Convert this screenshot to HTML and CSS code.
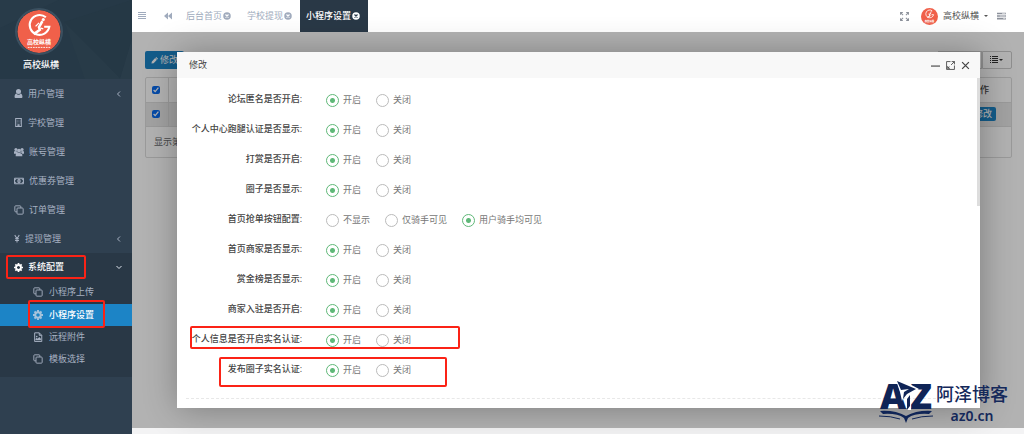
FILE: index.html
```html
<!DOCTYPE html>
<html lang="zh-CN">
<head>
<meta charset="utf-8">
<title>小程序设置</title>
<link rel="stylesheet" href="styles.css">
</head>
<body>
<svg class="defs" aria-hidden="true">
  <symbol id="copy" viewBox="0 0 12 12"><g fill="none" stroke="currentColor" stroke-width="1.1"><rect x="3.6" y="3.6" width="7.4" height="7.4" rx="1"/><path d="M3.500 8.200H2a1 1 0 0 1-1-1V2a1 1 0 0 1 1-1h5.200a1 1 0 0 1 1 1v1.500"/></g></symbol>
  <symbol id="gear" viewBox="0 0 16 16"><path fill="none" stroke="currentColor" stroke-width="3.400" d="M8 3.600a4.400 4.400 0 1 0 0 8.800 4.400 4.400 0 1 0 0-8.800"/><path stroke="currentColor" stroke-width="3" d="M8 0v3M8 13v3M0 8h3M13 8h3M2.400 2.400l2 2M11.600 11.600l2 2M2.400 13.600l2-2M11.600 4.400l2-2"/></symbol>
  <symbol id="close" viewBox="0 0 16 16"><circle cx="8" cy="8" r="7.500" fill="currentColor"/><path d="M5 5l6 6M11 5l-6 6" stroke="var(--cross, #fff)" stroke-width="2.400"/></symbol>
  <symbol id="left" viewBox="0 0 8 8"><path d="M5 1.500L2.500 4 5 6.500" fill="none" stroke="currentColor" stroke-width="1"/></symbol>
  <symbol id="pencil" viewBox="0 0 16 16"><path fill="currentColor" d="M1 15l1-5 7.500-7.500 4 4L6 14zM10.500 1.500L12 0l4 4-1.500 1.500z"/></symbol>
  <symbol id="brand" viewBox="0 0 50 50"><circle cx="25" cy="25" r="25" fill="#f0604a"/><g fill="none" stroke="#fff" stroke-width="2.400"><path d="M33 8.500a11.500 11.500 0 1 0 4 11h-6"/><path stroke-width="3" d="M29 13l-4 7 1 3-7 5"/><path stroke-width="1.500" d="M25 15l-4 4M27 21l3 1"/></g><circle cx="30" cy="11" r="1.800" fill="#fff"/><text class="brand-name" x="25" y="40" text-anchor="middle">高校纵横</text><path stroke="#fff" stroke-width="1" stroke-dasharray="2 1" d="M12 43.500h26"/></symbol>
</svg>
<div class="app">
  <aside class="sidebar">
    <header class="profile">
      <svg class="facets" viewBox="0 0 131 79" preserveAspectRatio="none" aria-hidden="true"><path d="M0 0h58L0 28z" fill="#283b49"/><path d="M64 22l56 57H84z" fill="#283b48"/><path d="M131 38v41h-12z" fill="#293c49"/><path d="M64 22L131 0v38l-12 40z" fill="#253845"/></svg>
      <svg class="avatar"><use href="#brand"/></svg>
      <strong>高校纵横</strong>
    </header>
    <nav>
      <a class="item" href="#"><svg class="ico" viewBox="0 0 16 16"><path fill="currentColor" d="M8 0a4 4 0 0 1 0 9 4.300 4.300 0 0 1 0-9M4 8c2 3 6 3 8 0 2 1 3 3 3 6 0 1-1 2-2 2H3c-1 0-2-1-2-2 0-3 1-5 3-6"/></svg><span>用户管理</span><svg class="arrow"><use href="#left"/></svg></a>
      <a class="item" href="#"><svg class="ico" viewBox="0 0 16 16"><path fill="none" stroke="currentColor" stroke-width="1.800" d="M3 1h10v14H3zM7 15v-3h2v3"/><path stroke="currentColor" stroke-dasharray="1.500 1.500" d="M5 4h7M5 6.500h7M5 9h7"/></svg><span>学校管理</span></a>
      <a class="item" href="#"><svg class="ico wide" viewBox="0 0 18 16"><g fill="currentColor"><circle cx="3.500" cy="3.500" r="2.800"/><circle cx="14.500" cy="3.500" r="2.800"/><circle cx="9" cy="5.500" r="3.500"/><path d="M0 11V8q0-2 2-2l4 1v4zM18 11V8q0-2-2-2l-4 1v4zM3 15.500q0-7 3-7 3 2 6 0 3 0 3 7z"/></g></svg><span>账号管理</span></a>
      <a class="item" href="#"><svg class="ico wide" viewBox="0 0 18 16"><path fill="none" stroke="currentColor" stroke-width="1.800" d="M1 3h16v10H1z"/><path fill="currentColor" d="M2 4h3L2 7zM16 4h-3l3 3zM2 12h3L2 9zM16 12h-3l3-3z"/><ellipse cx="9" cy="8" rx="3" ry="4" fill="currentColor"/><path d="M9 5.500v5" stroke="#2f4050"/></svg><span>优惠券管理</span></a>
      <a class="item" href="#"><svg class="ico wide"><use href="#copy"/></svg><span>订单管理</span></a>
      <a class="item yen" href="#"><svg class="ico slim" viewBox="0 0 10 16"><path fill="none" stroke="currentColor" stroke-width="1.800" d="M1 2l4 6 4-6M5 8v7M1.500 8.500h7M1.500 11.500h7"/></svg><span>提现管理</span><svg class="arrow"><use href="#left"/></svg></a>
      <div class="group">
        <a class="item open" href="#"><svg class="ico"><use href="#gear"/></svg><span>系统配置</span><svg class="arrow down"><use href="#left"/></svg><i class="mark mark-group"></i></a>
        <a class="sub" href="#"><svg class="ico wide"><use href="#copy"/></svg><span>小程序上传</span></a>
        <a class="sub current" href="#"><svg class="ico wide"><use href="#gear"/></svg><span>小程序设置</span><i class="mark mark-sub"></i></a>
        <a class="sub" href="#"><svg class="ico wide" viewBox="0 0 12 12"><path fill="none" stroke="currentColor" stroke-width="1.200" d="M2 1h5.500L10.500 4v7.500H2zM7.500 1v3h3"/><path fill="currentColor" d="M3 10V8.500l1.500-1.500 1 1L7.500 6l2 2v2z"/><circle cx="4.500" cy="5.500" r="1" fill="currentColor"/></svg><span>远程附件</span></a>
        <a class="sub" href="#"><svg class="ico wide"><use href="#copy"/></svg><span>模板选择</span></a>
      </div>
    </nav>
  </aside>
  <div class="page">
    <header class="topbar">
      <button class="bare menu" aria-label="菜单"><svg viewBox="0 0 8 8"><path stroke="currentColor" d="M0 .5h8M0 2.500h8M0 4.500h8M0 6.500h8"/></svg></button>
      <button class="bare back" aria-label="后退"><svg viewBox="0 0 16 16"><path fill="currentColor" d="M8 1v14L0 8zM16 1v14L8 8z"/></svg></button>
      <nav class="tabs">
        <a href="#">后台首页<svg><use href="#close"/></svg></a>
        <a href="#">学校提现<svg><use href="#close"/></svg></a>
        <a class="active" href="#">小程序设置<svg><use href="#close"/></svg></a>
      </nav>
      <div class="tools">
        <button class="bare full" aria-label="全屏"><svg viewBox="0 0 16 16"><path fill="none" stroke="currentColor" stroke-width="1.800" d="M1 5V1h4M11 1h4v4M15 11v4h-4M5 15H1v-4M1 1l4.500 4.500M15 1l-4.500 4.500M15 15l-4.500-4.500M1 15l4.500-4.500"/></svg></button>
        <button class="bare user"><svg class="face"><use href="#brand"/></svg>高校纵横<i class="caret"></i></button>
        <button class="bare tasks" aria-label="任务"><svg viewBox="0 0 16 14"><path stroke="currentColor" stroke-width="3" d="M0 2.500h16M0 7h16M0 11.500h16"/><path stroke="#fff" d="M9 2.500h6M5 7h10M11 11.500h4"/></svg></button>
      </div>
    </header>
    <main class="content">
      <div class="toolbar">
        <button class="edit"><svg><use href="#pencil"/></svg>修改</button>
        <div class="views"><button aria-label="刷新"></button><button aria-label="切换"></button><button aria-label="列"><svg viewBox="0 0 8 8"><path stroke="currentColor" d="M0 .5h1M0 2.500h1M0 4.500h1M0 6.500h1M2 .5h6M2 2.500h6M2 4.500h6M2 6.500h6"/></svg><i class="caret"></i></button></div>
      </div>
      <div class="panel">
        <table>
          <thead><tr><th class="tick"><input type="checkbox" checked aria-label="全选"></th><th></th><th class="action">操作</th></tr></thead>
          <tbody><tr><td class="tick"><input type="checkbox" checked aria-label="选择"></td><td></td><td class="action"><button class="edit small"><svg><use href="#pencil"/></svg>修改</button></td></tr></tbody>
        </table>
        <p>显示第</p>
      </div>
      <div class="shade"></div>
      <section class="dialog" role="dialog" aria-labelledby="dialog-title">
        <header>
          <h1 id="dialog-title">修改</h1>
          <button class="bare" aria-label="最小化"><svg viewBox="0 0 16 16"><path stroke="currentColor" stroke-width="2" d="M0 9h16"/></svg></button>
          <button class="bare" aria-label="最大化"><svg viewBox="0 0 16 16"><path fill="none" stroke="currentColor" stroke-width="1.500" d="M8 1H1v14h14V8M10 1h5v5M9 7l6-6M6 10l-3 3M3 9v4h4"/></svg></button>
          <button class="bare" aria-label="关闭"><svg viewBox="0 0 16 16"><path stroke="currentColor" stroke-width="2.200" d="M2 2l12 12M14 2L2 14"/></svg></button>
        </header>
        <form class="form">
          <fieldset><legend>论坛匿名是否开启:</legend><label><input type="radio" name="a" checked>开启</label><label><input type="radio" name="a">关闭</label></fieldset>
          <fieldset><legend>个人中心跑腿认证是否显示:</legend><label><input type="radio" name="b" checked>开启</label><label><input type="radio" name="b">关闭</label></fieldset>
          <fieldset><legend>打赏是否开启:</legend><label><input type="radio" name="c" checked>开启</label><label><input type="radio" name="c">关闭</label></fieldset>
          <fieldset><legend>圈子是否显示:</legend><label><input type="radio" name="d" checked>开启</label><label><input type="radio" name="d">关闭</label></fieldset>
          <fieldset><legend>首页抢单按钮配置:</legend><label><input type="radio" name="e">不显示</label><label><input type="radio" name="e">仅骑手可见</label><label><input type="radio" name="e" checked>用户骑手均可见</label></fieldset>
          <fieldset><legend>首页商家是否显示:</legend><label><input type="radio" name="f" checked>开启</label><label><input type="radio" name="f">关闭</label></fieldset>
          <fieldset><legend>赏金榜是否显示:</legend><label><input type="radio" name="g" checked>开启</label><label><input type="radio" name="g">关闭</label></fieldset>
          <fieldset><legend>商家入驻是否开启:</legend><label><input type="radio" name="h" checked>开启</label><label><input type="radio" name="h">关闭</label></fieldset>
          <fieldset><legend>个人信息是否开启实名认证:</legend><label><input type="radio" name="i" checked>开启</label><label><input type="radio" name="i">关闭</label><i class="mark mark-info"></i></fieldset>
          <fieldset><legend>发布圈子实名认证:</legend><label><input type="radio" name="j" checked>开启</label><label><input type="radio" name="j">关闭</label><i class="mark mark-post"></i></fieldset>
        </form>
        <i class="thumb"></i>
      </section>
    </main>
    <footer class="foot"></footer>
  </div>
</div>
<div class="watermark">
  <svg viewBox="0 0 54 42" aria-label="AZ"><g fill="#0f2456"><text class="logo-letter" x="1" y="28">A</text><text class="logo-letter" x="31" y="28">Z</text><path d="M1 30q15-1 26 5 11-6 26-5l-3 3q-14-1-21 4l-2 5-2-5q-7-5-21-4z"/><path d="M0 35q12 0 21 3M54 35q-12 0-21 3" fill="none" stroke="#0f2456"/></g><path d="M17-1l6 0 17 9-10 7 2 5v9h-4v-9l-3-5-2 5-2-9z" fill="#fff"/><path d="M18 0l19 8-9 5-4 5 1-7 5-3-8 1zM28 18l3-4v11l-3 4z" fill="#0f2456"/></svg>
  <div><b>阿泽博客</b><span>az0.cn</span></div>
</div>
</body>
</html>
```
FILE: styles.css
```css
* { box-sizing: border-box; }
body { margin: 0; font: 9px/14px "Open Sans", "Noto Sans CJK SC", sans-serif; color: #676a6c; }
a { color: inherit; text-decoration: none; }
button, input { font: inherit; }
svg { flex: none; }
.defs { position: absolute; width: 0; height: 0; }
.bare { display: flex; align-items: center; padding: 0; border: 0; background: none; color: inherit; }
.app { display: flex; min-height: 100vh; }

.sidebar { flex: none; width: 132px; background: #2f4050; color: #a7b1c2; }
.profile { position: relative; display: flex; flex-direction: column; align-items: flex-start; gap: 3px; height: 79px; padding: 8px 0 0 15px; background: #263947; color: #fff; }
.facets { position: absolute; inset: 0; width: 100%; height: 100%; }
.avatar { position: relative; width: 48px; height: 47px; border: 2px solid #3b5060; border-radius: 50%; }
.profile strong { position: relative; padding-left: 8px; font-weight: 500; }
.brand-name { font: 700 7px "Noto Sans CJK SC", sans-serif; fill: #fff; }
.item { position: relative; display: flex; align-items: center; gap: 5px; height: 29px; padding: 0 9px 0 14px; }
.ico { width: 9px; height: 9px; }
.ico.wide { width: 10px; height: 10px; }
.ico.slim { width: 6px; height: 9px; }
.arrow { width: 8px; height: 8px; margin-left: auto; }
.arrow.down { transform: rotate(-90deg); color: #dfe4ed; }
.group { padding-bottom: 7px; background: #293846; }
.open { color: #fff; font-weight: 500; height: 28px; }
.sub { position: relative; display: flex; align-items: center; gap: 6px; height: 22px; padding-left: 33px; }
.open + .sub { height: 23px; padding-bottom: 2px; }
.current { background: #1c84c6; color: #fff; font-weight: 500; }
.current .ico { color: #a7c4dc; }

.mark { position: absolute; border: 2px solid #fb2316; border-radius: 2px; pointer-events: none; z-index: 2; }
.mark-group { inset: 2px 46px 2px 6px; }
.mark-sub { inset: -4px 27px -2px 28px; }

.page { flex: 1; min-width: 0; display: flex; flex-direction: column; }
.topbar { display: flex; align-items: center; height: 32px; padding: 0 18px 0 6px; background: #fff; color: #a0abbd; }
.topbar svg { width: 8px; height: 8px; }
.menu { margin-right: 18px; }
.tabs { display: flex; align-self: stretch; margin-left: 6px; }
.tabs a { display: flex; align-items: center; gap: 1px; padding: 0 8px; }
.tabs .active { --cross: #293846; padding: 0 8px 0 6px; background: #293846; color: #fff; font-weight: 500; }
.tools { display: flex; align-items: center; gap: 9px; margin-left: auto; color: #8b909a; }
.user { gap: 5px; color: #555; }
.full { margin-right: 3px; }
.topbar .full svg { width: 9px; height: 9px; }
.topbar .face { width: 17px; height: 17px; }
.topbar .tasks svg { width: 9px; height: 8px; }
.caret { border: 2px solid transparent; border-top-color: currentColor; border-bottom: 0; }

.content { position: relative; flex: 1; padding: 19px 12px 0 13px; background: #fff; }
.toolbar { display: flex; justify-content: space-between; height: 26px; }
.edit { display: flex; align-items: center; gap: 2px; height: 18px; padding: 0 6px; border: 0; border-radius: 2px; background: #1c84c6; color: #fff; }
.edit svg { width: 7px; height: 7px; }
.edit.small { height: 14px; padding: 0 4px; }
.views { display: flex; height: 18px; }
.views button { display: flex; align-items: center; gap: 1px; width: 22px; padding: 0; border: 1px solid #ccc; background: #fff; color: #333; }
.views button:last-child { width: 30px; padding-left: 7px; border-radius: 0 2px 2px 0; }
.views svg { width: 8px; height: 8px; }
.panel { border: 1px solid #ddd; border-radius: 2px; height: 81px; }
.panel table { width: 100%; border-collapse: collapse; color: #444; }
.panel tr { height: 24px; }
.panel th, .panel td { padding: 0; border-bottom: 1px solid #ddd; }
.panel tbody { background: #e8e8e8; }
.panel .tick { width: 22px; border-right: 1px solid #ddd; }
.tick input { display: block; width: 8px; height: 8px; margin: 0 6px; accent-color: #0a6cf0; }
.panel .action { width: 52px; padding-left: 12px; text-align: left; font-weight: 500; }
.panel td.action { padding-left: 2px; }
.panel p { margin: 8px; }
.shade { position: absolute; inset: 0; background: #0000004d; }

.dialog { position: absolute; inset: 20px 44px 20px 45px; display: flex; flex-direction: column; background: #fff; box-shadow: 1px 1px 32px #0000004d; }
.dialog header { display: flex; align-items: center; gap: 6px; height: 26px; padding: 0 10px 0 12px; background: #f8f8f8; color: #444; }
.dialog h1 { margin: 0 auto 0 0; font: inherit; }
.dialog header svg { width: 9px; height: 9px; }
.form { flex: 1; margin: 0 9px 9px; padding-top: 7px; border-bottom: 1px dashed #e8e8e8; }
.form fieldset { position: relative; display: flex; align-items: center; gap: 15px; height: 30px; margin: 0; padding: 0; border: 0; min-width: 0; }
.form legend { float: left; width: 118px; margin-right: 7px; padding-bottom: 2px; text-align: right; white-space: nowrap; color: #444; font-weight: 500; }
.form label { display: flex; align-items: center; gap: 4px; white-space: nowrap; color: #777; }
.form input { appearance: none; width: 13px; height: 13px; margin: 0; border: 1px solid #bbb; border-radius: 50%; }
.form input:checked { border-color: #5fb878; background: radial-gradient(circle, #5fb878 2px, transparent 3px); }
.mark-info { left: 4px; top: 1px; width: 270px; height: 23px; }
.mark-post { left: 33px; top: 2px; width: 228px; height: 30px; }
.thumb { position: absolute; top: 26px; right: 0; width: 3px; height: 128px; background: #ddd; }
.foot { height: 6px; background: #f3f3f4; }

.watermark { position: absolute; right: 16px; bottom: 10px; z-index: 3; display: flex; gap: 3px; color: #14285a; }
.watermark svg { width: 54px; height: 44px; overflow: visible; }
.logo-letter { font: 800 36px "Open Sans", sans-serif; }
.watermark div { display: flex; flex-direction: column; align-items: center; gap: 2px; }
.watermark b { font: 500 18px/26px "Noto Sans CJK SC", sans-serif; }
.watermark span { font: 600 14px/16px "Noto Sans", sans-serif; }
```
